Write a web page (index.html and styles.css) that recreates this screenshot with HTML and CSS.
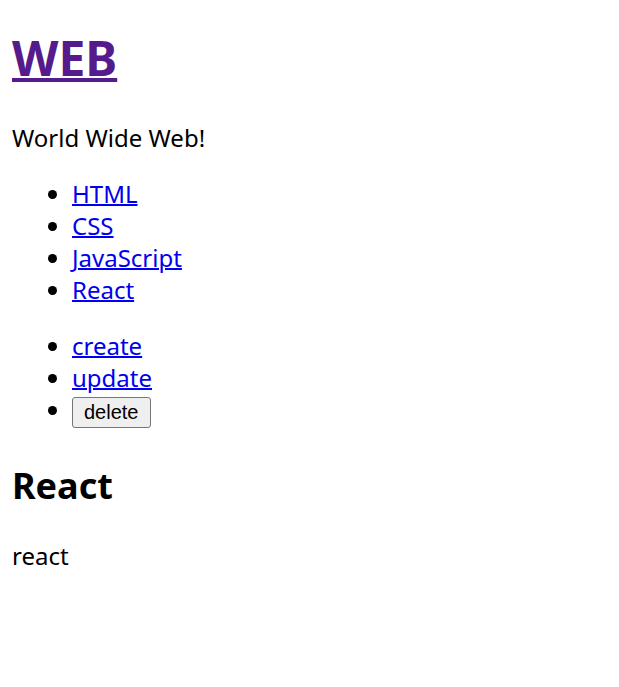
FILE: index.html
```html
<!DOCTYPE html>
<html lang="ko">
<head>
  <meta charset="UTF-8">
  <meta name="viewport" content="width=device-width, initial-scale=1.0">
  <title>WEB</title>
  <link rel="stylesheet" href="styles.css">
</head>
<body>
  <header>
    <h1 class="title"><a href="/">WEB</a></h1>
  </header>
  <p>World Wide Web!</p>

  <!-- topics -->
  <nav>
    <ul class="list">
      <li><a href="/read/1">HTML</a></li>
      <li><a href="/read/2">CSS</a></li>
      <li><a href="/read/3">JavaScript</a></li>
      <li><a href="/read/4">React</a></li>
    </ul>
  </nav>

  <!-- controls -->
  <ul class="list">
    <li><a href="/create">create</a></li>
    <li><a href="/update/4">update</a></li>
    <li><button class="del" type="button">delete</button></li>
  </ul>

  <article>
    <h2>React</h2>
    <p>react</p>
  </article>
</body>
</html>
```

FILE: styles.css
```css
body {
  margin: 0;
  padding: 12px;
  font-family: 'Noto Sans', 'Noto Sans CJK KR', sans-serif;
  font-size: 24px;
  line-height: 32px;
  color: #000;
  background: #fff;
}

h1 {
  font-size: 48px;
  line-height: 64px;
  margin: 14px 0 32px;
}

h2 {
  font-size: 36px;
  line-height: 48px;
  margin: 34px 0 30px;
}

p {
  margin: 24px 0;
}

a {
  color: #0000ee;
  text-decoration-thickness: 2px;
}

.title a {
  color: #551a8b;
  text-decoration-thickness: 4px;
}

.list {
  margin: 24px 0;
  padding-left: 60px;
}

.del {
  font-family: 'Liberation Sans', Arial, sans-serif;
  font-size: 20px;
  line-height: 20px;
  padding: 4.5px 11px;
  border: 1.5px solid #767676;
  border-radius: 3px;
  background: #efefef;
  color: #000;
}
```
